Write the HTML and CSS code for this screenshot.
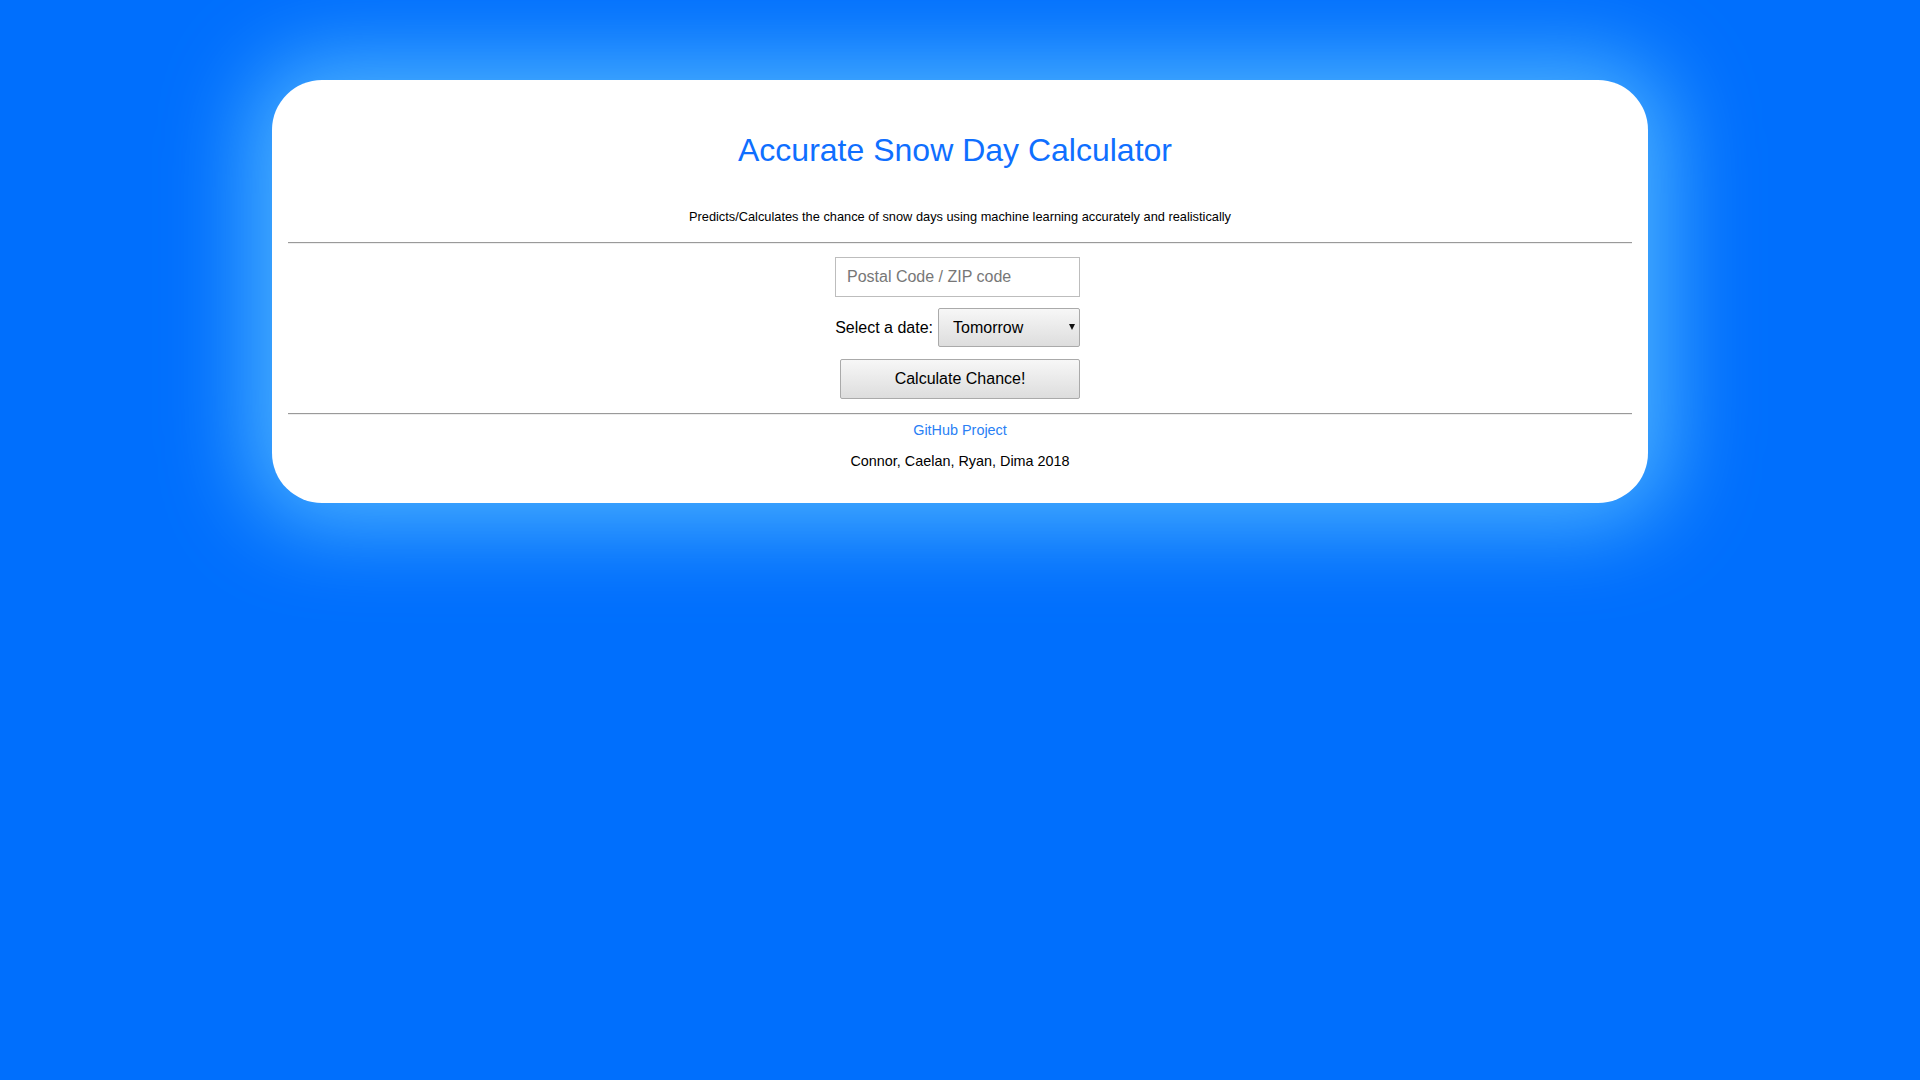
FILE: index.html
```html
<!DOCTYPE html>
<html>
<head>
<meta charset="utf-8">
<title>Accurate Snow Day Calculator</title>
<link rel="stylesheet" href="styles.css">
</head>
<body>
<div class="card">
  <h1 class="title">Accurate Snow Day Calculator</h1>
  <p class="subtitle">Predicts/Calculates the chance of snow days using machine learning accurately and realistically</p>
  <hr class="rule">
  <form class="form">
    <input class="zip" type="text" placeholder="Postal Code / ZIP code">
    <div class="date-row">
      <label class="date-label">Select a date:</label>
      <span class="select-wrap">
        <select class="date-select">
          <option>Tomorrow</option>
          <option>Today</option>
        </select>
      </span>
    </div>
    <button class="calc" type="button">Calculate Chance!</button>
  </form>
  <hr class="rule rule-bottom">
  <a class="github" href="#">GitHub Project</a>
  <p class="credits">Connor, Caelan, Ryan, Dima 2018</p>
</div>
</body>
</html>
```
FILE: styles.css
```css
html, body {
  margin: 0;
  padding: 0;
}
body {
  background: #006ffd;
  font-family: "Liberation Sans", Arial, sans-serif;
  min-height: 1080px;
  padding-top: 80px;
  box-sizing: border-box;
}
.card {
  width: 70%;
  margin: 0 auto;
  padding: 16px;
  background: #fff;
  border-radius: 50px;
  box-shadow: 0 0 90px 20px rgba(85, 185, 255, 0.95);
  text-align: center;
  display: flex;
  flex-direction: column;
  align-items: stretch;
}
.title {
  margin: 36px 0 0;
  padding-right: 10px;
  font-size: 32px;
  line-height: 37px;
  font-weight: normal;
  color: #0f6fff;
}
.subtitle {
  margin: 40px 0 0;
  font-size: 12.8px;
  line-height: 15px;
  color: #000;
}
.rule {
  margin: 18px 0 0;
  height: 0;
  border: 0;
  border-top: 1px solid #9a9a9a;
  border-bottom: 1px solid #eeeeee;
}
.form {
  margin: 13px auto 0;
  width: 250px;
  padding-right: 5px;
  box-sizing: border-box;
  display: flex;
  flex-direction: column;
  align-items: flex-end;
}
.zip {
  width: 245px;
  height: 40px;
  box-sizing: border-box;
  border: 1px solid #bdbdbd;
  padding: 0 11px;
  font-family: "Liberation Sans", Arial, sans-serif;
  font-size: 16px;
  color: #000;
  outline: none;
  margin: 0;
}
.zip::placeholder {
  color: #777;
}
.date-row {
  margin-top: 11px;
  display: flex;
  align-items: center;
  gap: 5px;
}
.date-label {
  font-size: 16px;
  color: #000;
}
.select-wrap {
  position: relative;
  display: block;
}
.select-wrap::after {
  content: "";
  position: absolute;
  right: 5px;
  top: 16px;
  border-left: 3px solid transparent;
  border-right: 3px solid transparent;
  border-top: 6px solid #111;
  pointer-events: none;
}
.date-select {
  appearance: none;
  -webkit-appearance: none;
  width: 142px;
  height: 39px;
  box-sizing: border-box;
  border: 1px solid #aaaaaa;
  border-radius: 2px;
  background: linear-gradient(#f7f7f7, #dddddd);
  padding: 0 0 0 14px;
  font-family: "Liberation Sans", Arial, sans-serif;
  font-size: 16px;
  color: #000;
  margin: 0;
  display: block;
}
.calc {
  margin: 12px 0 0;
  width: 240px;
  height: 40px;
  box-sizing: border-box;
  border: 1px solid #aaaaaa;
  border-radius: 2px;
  background: linear-gradient(#f7f7f7, #dddddd);
  font-family: "Liberation Sans", Arial, sans-serif;
  font-size: 16px;
  color: #000;
  padding: 0;
}
.rule-bottom {
  margin-top: 14px;
}
.github {
  margin-top: 7px;
  align-self: center;
  font-size: 14.4px;
  line-height: 17px;
  color: #2a7ff5;
  text-decoration: none;
}
.credits {
  margin: 14px 0 17px;
  font-size: 14.4px;
  line-height: 17px;
  color: #000;
}
```
